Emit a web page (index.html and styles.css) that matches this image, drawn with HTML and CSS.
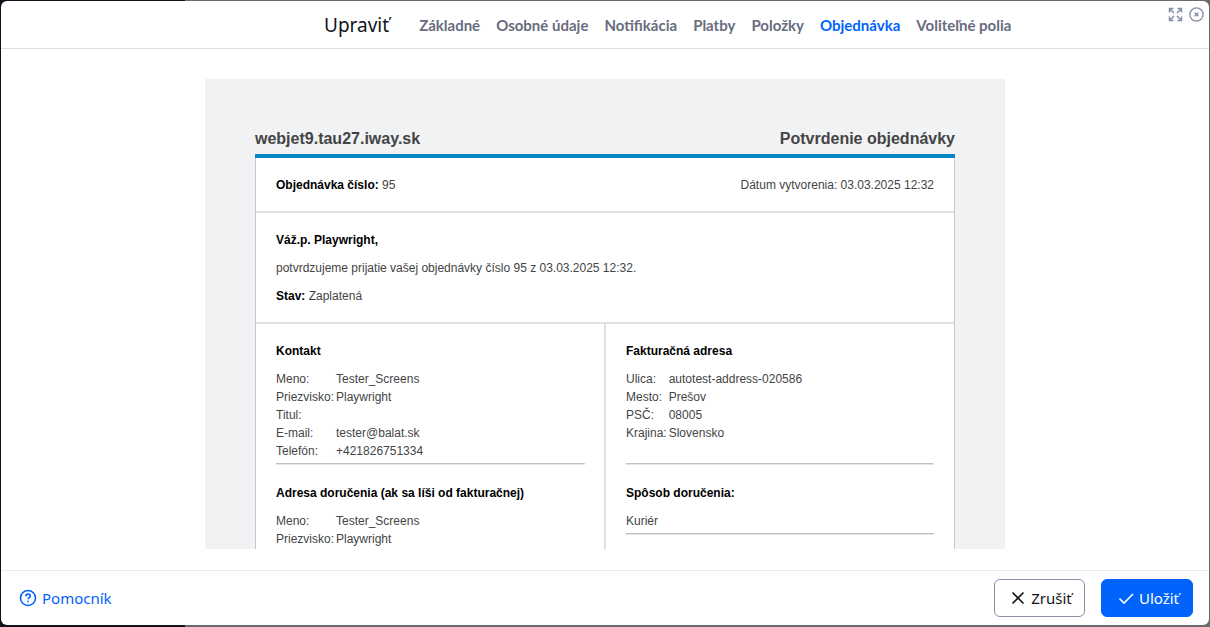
FILE: index.html
```html
<!DOCTYPE html>
<html lang="sk">
<head>
<meta charset="utf-8">
<title>Upraviť</title>
<link rel="stylesheet" href="styles.css">
</head>
<body>
<div class="modal" role="dialog" aria-labelledby="modal-title">
  <header class="modal-header">
    <div class="heading">
      <h1 class="title" id="modal-title">Upraviť</h1>
      <nav class="tabs">
        <a href="#zakladne">Základné</a>
        <a href="#osobne">Osobné údaje</a>
        <a href="#notifikacia">Notifikácia</a>
        <a href="#platby">Platby</a>
        <a href="#polozky">Položky</a>
        <a href="#objednavka" class="active" aria-current="true">Objednávka</a>
        <a href="#volitelne">Voliteľné polia</a>
      </nav>
    </div>
    <div class="window-actions">
      <button type="button" class="icon-button" aria-label="Maximalizovať">
        <svg width="15" height="15" viewBox="0 0 15 15" fill="none" stroke="currentColor" stroke-width="1.5"><path d="M1.5 5.5v-4h4M1.5 1.5l4.5 4.500M9.500 1.500h4v4M13.500 1.500l-4.500 4.500M1.500 9.500v4h4M1.500 13.500l4.500-4.500M9.500 13.500h4v-4M13.500 13.500l-4.500-4.500"/></svg>
      </button>
      <button type="button" class="icon-button" aria-label="Zavrieť">
        <svg width="15" height="15" viewBox="0 0 15 15" fill="none" stroke="currentColor"><circle cx="7.500" cy="7.500" r="6.600" stroke-width="1.300"/><path d="M5.700 5.700l3.600 3.600M9.300 5.700l-3.600 3.600" stroke-width="1.600"/></svg>
      </button>
    </div>
  </header>

  <main class="modal-body">
    <article class="preview">
      <div class="letterhead"><h2>webjet9.tau27.iway.sk</h2><h2>Potvrdenie objednávky</h2></div>
      <div class="order">
        <section class="cell order-number">
          <p><strong>Objednávka číslo:</strong> 95</p>
          <p>Dátum vytvorenia: 03.03.2025 12:32</p>
        </section>
        <section class="cell message">
          <p><strong>Váž.p. Playwright,</strong></p>
          <p>potvrdzujeme prijatie vašej objednávky číslo 95 z 03.03.2025 12:32.</p>
          <p><strong>Stav:</strong> Zaplatená</p>
        </section>
        <div class="columns">
          <div class="column">
            <h3>Kontakt</h3>
            <table>
              <tr><th scope="row">Meno:</th><td>Tester_Screens</td></tr>
              <tr><th scope="row">Priezvisko:</th><td>Playwright</td></tr>
              <tr><th scope="row">Titul:</th><td></td></tr>
              <tr><th scope="row">E-mail:</th><td>tester@balat.sk</td></tr>
              <tr><th scope="row">Telefón:</th><td>+421826751334</td></tr>
            </table>
            <hr>
            <h3>Adresa doručenia (ak sa líši od fakturačnej)</h3>
            <table>
              <tr><th scope="row">Meno:</th><td>Tester_Screens</td></tr>
              <tr><th scope="row">Priezvisko:</th><td>Playwright</td></tr>
            </table>
          </div>
          <div class="column">
            <h3>Fakturačná adresa</h3>
            <div class="billing">
              <table>
                <tr><th scope="row">Ulica:</th><td>autotest-address-020586</td></tr>
                <tr><th scope="row">Mesto:</th><td>Prešov</td></tr>
                <tr><th scope="row">PSČ:</th><td>08005</td></tr>
                <tr><th scope="row">Krajina:</th><td>Slovensko</td></tr>
              </table>
            </div>
            <hr>
            <h3>Spôsob doručenia:</h3>
            <p>Kuriér</p>
            <hr>
          </div>
        </div>
      </div>
    </article>
  </main>

  <footer class="modal-footer">
    <a class="help" href="#pomocnik">
      <svg width="18" height="18" viewBox="0 0 18 18" fill="none" stroke="currentColor" stroke-width="1.600"><circle cx="9" cy="9" r="7.500"/><path d="M6.800 7.200c0-1.300 1-2.100 2.300-2.100s2.200.8 2.200 1.900c0 1.600-2.200 1.700-2.200 3.200"/><circle cx="9.100" cy="12.500" r=".9" fill="currentColor" stroke="none"/></svg>
      Pomocník
    </a>
    <div class="buttons">
      <button type="button" class="button">
        <svg width="16" height="16" viewBox="0 0 16 16" fill="none" stroke="currentColor" stroke-width="1.600"><path d="M2.500 2.500l11 11M13.500 2.500l-11 11"/></svg>
        Zrušiť
      </button>
      <button type="button" class="button primary">
        <svg width="16" height="16" viewBox="0 0 16 16" fill="none" stroke="currentColor" stroke-width="1.600"><path d="M1.500 8.500l4.500 4.500 9-9"/></svg>
        Uložiť
      </button>
    </div>
  </footer>
</div>
</body>
</html>
```
FILE: styles.css
```css
* {
  box-sizing: border-box;
}

body {
  margin: 0;
  height: 100vh;
  padding: 1px 1px 2px;
  background: linear-gradient(to right, #13111b 185px, #6b696b 185px);
  color: #13151b;
  font-family: "Noto Sans", "Open Sans", sans-serif;
}

h1, h2, h3, p {
  margin: 0;
}

a {
  text-decoration: none;
}

button {
  font: inherit;
  cursor: pointer;
}

.modal {
  display: flex;
  flex-direction: column;
  height: 100%;
  background: #fff;
  border-radius: 6px;
  overflow: hidden;
}

.modal-header {
  display: flex;
  justify-content: space-between;
  align-items: flex-start;
  border-bottom: 1px solid #dde0e7;
  padding-left: calc(50% - 281px);
}

.heading {
  display: flex;
  align-items: center;
  gap: 30px;
  height: 47px;
}

.title {
  font-size: 19px;
  font-weight: 400;
}

.tabs {
  display: flex;
  gap: 16px;
  font-family: Lato, "Noto Sans", sans-serif;
  font-size: 15px;
  font-weight: 700;
  white-space: nowrap;
}

.tabs a {
  color: #686c7e;
}

.tabs .active {
  color: #0063fb;
}

.window-actions {
  display: flex;
  gap: 6px;
  padding: 6px 5px;
}

.icon-button {
  display: flex;
  padding: 0;
  border: 0;
  background: none;
  color: #868ea8;
}

.modal-body {
  flex: 1;
  display: flex;
  justify-content: center;
  min-height: 0;
  padding: 30px 16px 21px;
}

.preview {
  display: flex;
  flex-direction: column;
  width: 100%;
  max-width: 800px;
  padding: 51px 50px 0;
  overflow: hidden;
  background: #f1f2f4;
  color: #444;
  font: 12px/18px "Liberation Sans", Arial, sans-serif;
}

.letterhead {
  display: flex;
  justify-content: space-between;
  padding-bottom: 6px;
  border-bottom: 4px solid #0787c1;
}

.letterhead h2 {
  font-size: 16px;
}

.order {
  flex: 1;
  display: flex;
  flex-direction: column;
  border: solid #c5c7ca;
  border-width: 0 1px;
  background: #fff;
}

.order strong, .order h3 {
  color: #000;
}

.cell {
  padding: 18px 20px 17px;
  border-bottom: 2px solid #e0e0e0;
}

.order-number {
  display: flex;
  justify-content: space-between;
}

.message {
  display: grid;
  gap: 10px;
}

.columns {
  flex: 1;
  display: grid;
  grid-template-columns: 350fr 348fr;
}

.column {
  padding: 18px 20px 0;
}

.column:first-child {
  padding-right: 19px;
  border-right: 2px solid #e0e0e0;
}

.column h3 {
  margin-bottom: 10px;
  font-size: 12px;
}

.column table {
  border-collapse: collapse;
}

.column th, .column td {
  height: 18px;
  padding: 0 2px 0 0;
  font-weight: 400;
  text-align: left;
}

.billing {
  min-height: 90px;
}

.column hr {
  margin: 3px 0 19px;
  border: 1px solid;
  border-color: #c0c0c0 #e6e6e6 #e6e6e6 #c0c0c0;
}

.modal-footer {
  display: flex;
  justify-content: space-between;
  align-items: center;
  padding: 8px 16px 8px 18px;
  border-top: 1px solid #ebebed;
  font-size: 15px;
}

.help {
  display: flex;
  align-items: center;
  gap: 5px;
  color: #0063fb;
}

.buttons {
  display: flex;
  gap: 16px;
}

.button {
  display: flex;
  align-items: center;
  justify-content: center;
  gap: 5px;
  min-width: 91px;
  height: 38px;
  padding: 0 11px 0 14px;
  border: 1px solid #868ea8;
  border-radius: 6px;
  background: #fff;
  color: #13151b;
}

.button.primary {
  min-width: 92px;
  border-color: #0063fb;
  background: #0063fb;
  color: #fff;
}
```
